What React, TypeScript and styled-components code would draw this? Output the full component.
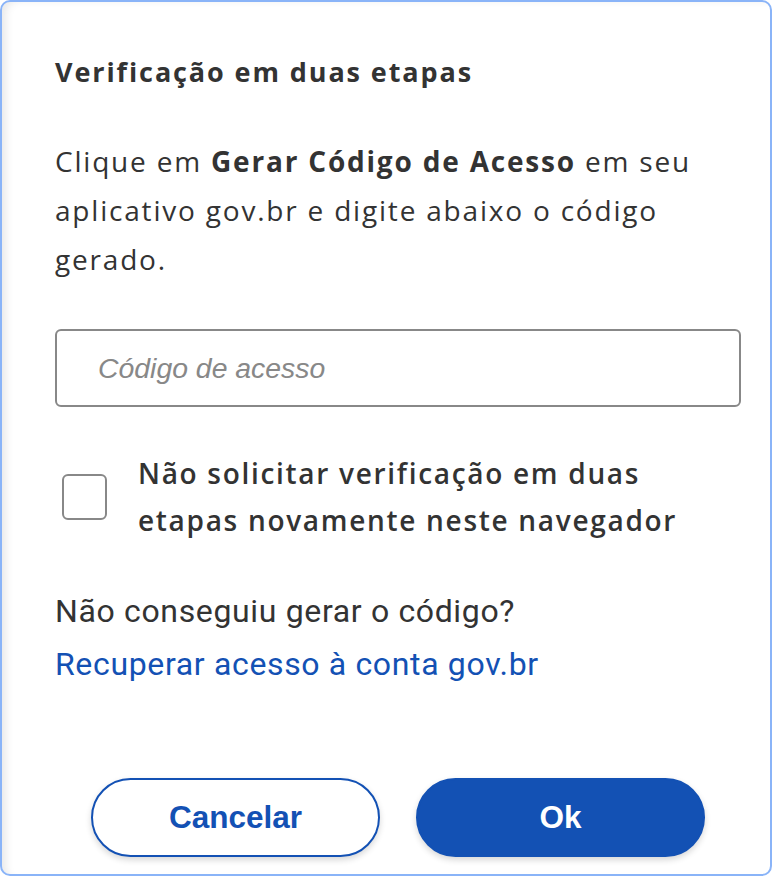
import React from "react";
import styled, { createGlobalStyle } from "styled-components";

const Global = createGlobalStyle`
  html, body { margin: 0; padding: 0; background: #ffffff; }
  * { box-sizing: border-box; }
`;

const Card = styled.div`
  width: 772px;
  height: 876px;
  border: 2px solid #8ab4f8;
  border-radius: 10px;
  background: #ffffff;
  box-shadow: inset 9px 3px 8px -5px rgba(0, 0, 0, 0.09);
  padding: 50px 29px 0 53px;
  display: flex;
  flex-direction: column;
  color: #333333;
`;

const Title = styled.h1`
  margin: 0;
  font-family: "Open Sans", sans-serif;
  font-weight: 700;
  font-size: 27px;
  line-height: 40px;
  letter-spacing: 1.9px;
  color: #333333;
`;

const Paragraph = styled.p`
  margin: 45px 0 0;
  font-family: "Open Sans", sans-serif;
  font-weight: 400;
  font-size: 28px;
  line-height: 49px;
  letter-spacing: 1.8px;
  color: #333333;
  b { font-weight: 700; }
`;

const Input = styled.input`
  margin-top: 45px;
  width: 100%;
  height: 78px;
  border: 2px solid #888888;
  border-radius: 6px;
  padding: 0 0 0 41px;
  font-family: "Liberation Sans", Arial, sans-serif;
  font-style: italic;
  font-size: 28.4px;
  color: #333333;
  outline: none;
  &::placeholder { color: #888888; }
`;

const CheckRow = styled.label`
  margin-top: 43px;
  display: flex;
  align-items: center;
  gap: 31px;
  padding-left: 7px;
`;

const Box = styled.span`
  flex: none;
  width: 45px;
  height: 46px;
  border: 2px solid #888888;
  border-radius: 6px;
  background: #ffffff;
`;

const CheckText = styled.span`
  font-family: "Open Sans", sans-serif;
  font-weight: 600;
  font-size: 28px;
  line-height: 47px;
  letter-spacing: 1.7px;
  color: #333333;
`;

const Help = styled.div`
  margin-top: 41px;
  font-family: Roboto, sans-serif;
  font-size: 32px;
  line-height: 53px;
  letter-spacing: 0.65px;
  color: #333333;
`;

const Link = styled.a`
  display: block;
  color: #1351b4;
  text-decoration: none;
`;

const Actions = styled.div`
  margin-top: 87px;
  display: flex;
  justify-content: center;
  gap: 36px;
`;

const Button = styled.button<{ $primary?: boolean }>`
  width: 289px;
  height: 79px;
  border-radius: 40px;
  border: 2px solid #1351b4;
  background: ${(p) => (p.$primary ? "#1351b4" : "#ffffff")};
  color: ${(p) => (p.$primary ? "#ffffff" : "#1351b4")};
  font-family: "Liberation Sans", Arial, sans-serif;
  font-weight: 700;
  font-size: 31.5px;
  box-shadow: 0 3px 6px rgba(0, 0, 0, 0.16);
  cursor: pointer;
`;

export default function App() {
  return (
    <>
      <Global />
      <Card>
        <Title>Verificação em duas etapas</Title>
        <Paragraph>
          Clique em <b>Gerar Código de Acesso</b> em seu
          <br />
          aplicativo gov.br e digite abaixo o código
          <br />
          gerado.
        </Paragraph>
        <Input placeholder="Código de acesso" />
        <CheckRow>
          <Box />
          <CheckText>
            Não solicitar verificação em duas
            <br />
            etapas novamente neste navegador
          </CheckText>
        </CheckRow>
        <Help>
          Não conseguiu gerar o código?
          <Link href="#">Recuperar acesso à conta gov.br</Link>
        </Help>
        <Actions>
          <Button>Cancelar</Button>
          <Button $primary>Ok</Button>
        </Actions>
      </Card>
    </>
  );
}
